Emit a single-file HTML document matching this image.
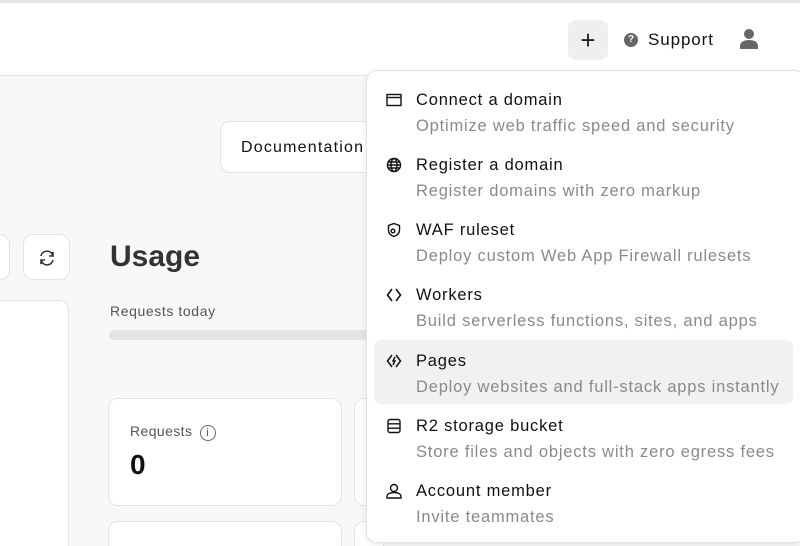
<!DOCTYPE html>
<html><head><style>
*{box-sizing:border-box;margin:0;padding:0}
html{width:800px;height:546px;overflow:hidden}
body{width:800px;height:546px;overflow:hidden;background:#f8f8f8;font-family:"Liberation Sans",sans-serif;position:relative;color:#111}
.hdr{position:absolute;left:0;top:0;width:800px;height:76px;background:#fff;border-top:3px solid #e6e6e6;border-bottom:1px solid #e2e2e2}
.abs{position:absolute}
.card{position:absolute;background:#fff;border:1px solid #e3e3e3;border-radius:10px}
.menu{position:absolute;left:366px;top:70px;width:440px;height:473px;background:#fff;border:1px solid #e2e2e2;border-radius:11px;box-shadow:0 2px 8px rgba(0,0,0,.08)}
.it{position:absolute;left:0;width:430px;height:64px}
.it .t{position:absolute;left:49px;top:11px;font-size:16.5px;letter-spacing:0.8px;color:#111;white-space:nowrap}
.it .s{position:absolute;left:49px;top:37px;font-size:16.5px;letter-spacing:0.8px;color:#8a8a8a;white-space:nowrap}
.it svg{position:absolute;left:19px;top:12px}
</style></head><body>
<div class="hdr">
 <div class="abs" style="left:568px;top:17px;width:40px;height:40px;background:#efefef;border-radius:8px;font-size:26px;text-align:center;line-height:40px;color:#222">+</div>
 <div class="abs" style="left:624px;top:30px;width:14px;height:14px;border-radius:50%;background:#666;color:#fff;font-size:10px;font-weight:bold;text-align:center;line-height:14px">?</div>
 <div class="abs" style="left:648px;top:27px;font-size:17px;letter-spacing:0.9px;color:#111">Support</div>
 <svg class="abs" style="left:739px;top:25px" width="20" height="22" viewBox="0 0 20 22"><circle cx="10" cy="6" r="5" fill="#666"/><path d="M1 21v-3c0-4 4-6 9-6s9 2 9 6v3z" fill="#666"/></svg>
</div>
<div class="card" style="left:220px;top:121px;width:170px;height:52px"><div class="abs" style="left:20px;top:17px;font-size:16px;letter-spacing:1.2px">Documentation</div></div>
<div class="card" style="left:-20px;top:234px;width:30px;height:46px"></div>
<div class="card" style="left:23px;top:234px;width:47px;height:46px"><svg class="abs" style="left:13px;top:13px" width="20" height="20" viewBox="0 0 20 20" fill="none" stroke="#333" stroke-width="1.6"><path d="M4 8a6 6 0 0 1 11-2l1-2v4h-4M16 12a6 6 0 0 1-11 2l-1 2v-4h4"/></svg></div>
<div class="card" style="left:-20px;top:300px;width:89px;height:260px"></div>
<div class="abs" style="left:110px;top:240px;font-size:30px;font-weight:bold;color:#333">Usage</div>
<div class="abs" style="left:110px;top:303px;font-size:14px;letter-spacing:0.6px;color:#555">Requests today</div>
<div class="abs" style="left:109px;top:330px;width:300px;height:10px;background:#e4e4e4;border-radius:5px"></div>
<div class="card" style="left:108px;top:398px;width:234px;height:108px"><div class="abs" style="left:21px;top:24px;font-size:14px;letter-spacing:0.4px;color:#555">Requests <span style="display:inline-block;width:16px;height:16px;border:1.3px solid #666;border-radius:50%;font-size:11px;text-align:center;line-height:14px;margin-left:3px">i</span></div><div class="abs" style="left:21px;top:50px;font-size:28px;font-weight:bold">0</div></div>
<div class="card" style="left:354px;top:398px;width:30px;height:108px"></div>
<div class="card" style="left:108px;top:521px;width:234px;height:40px"></div>
<div class="card" style="left:354px;top:521px;width:30px;height:40px"></div>
<div class="menu">
 <div class="abs" style="left:7px;top:269px;width:419px;height:64px;background:#f1f1f1;border-radius:7px"></div>
 <div class="it" style="top:9px"><svg width="16" height="16" viewBox="0 0 16 16" fill="none" stroke="#111" stroke-width="1.4"><rect x="1" y="2.5" width="14" height="11"/><path d="M1 5.5h14"/></svg><div class="t">Connect a domain</div><div class="s">Optimize web traffic speed and security</div></div>
 <div class="it" style="top:74px"><svg width="16" height="16" viewBox="0 0 16 16" fill="none" stroke="#111" stroke-width="1.4"><circle cx="8" cy="8" r="6.5"/><ellipse cx="8" cy="8" rx="3" ry="6.5"/><path d="M1.5 8h13M2.5 5h11M2.5 11h11"/></svg><div class="t">Register a domain</div><div class="s">Register domains with zero markup</div></div>
 <div class="it" style="top:139px"><svg width="16" height="16" viewBox="0 0 16 16" fill="none" stroke="#111" stroke-width="1.4"><path d="M8 1.5l5.5 2v4.5c0 3.5-2.5 5.5-5.5 6.5-3-1-5.5-3-5.5-6.5V3.5z"/><circle cx="7" cy="9" r="1.8"/></svg><div class="t">WAF ruleset</div><div class="s">Deploy custom Web App Firewall rulesets</div></div>
 <div class="it" style="top:204px"><svg width="16" height="16" viewBox="0 0 16 16" fill="none" stroke="#111" stroke-width="1.6"><path d="M6 2L1.5 8 6 14M10 2l4.5 6L10 14"/></svg><div class="t">Workers</div><div class="s">Build serverless functions, sites, and apps</div></div>
 <div class="it" style="top:270px"><svg width="16" height="16" viewBox="0 0 16 16" fill="none" stroke="#111" stroke-width="1.5"><path d="M6 2L1.5 8 6 14M10 2l4.5 6L10 14M9 4L7 8h2l-2 4"/></svg><div class="t">Pages</div><div class="s">Deploy websites and full-stack apps instantly</div></div>
 <div class="it" style="top:335px"><svg width="16" height="16" viewBox="0 0 16 16" fill="none" stroke="#111" stroke-width="1.4"><rect x="2" y="1.5" width="12" height="13" rx="2"/><path d="M2 5.8h12M2 10.2h12"/></svg><div class="t">R2 storage bucket</div><div class="s">Store files and objects with zero egress fees</div></div>
 <div class="it" style="top:400px"><svg width="16" height="16" viewBox="0 0 16 16" fill="none" stroke="#111" stroke-width="1.4"><circle cx="8" cy="5" r="3.5"/><path d="M1 15v-1.5c0-2.5 3-4 7-4s7 1.5 7 4V15z"/></svg><div class="t">Account member</div><div class="s">Invite teammates</div></div>
</div>
</body></html>
